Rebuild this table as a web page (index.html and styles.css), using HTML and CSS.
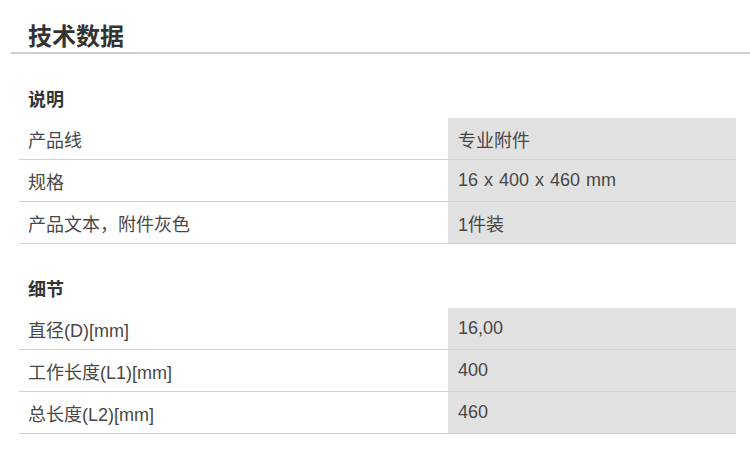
FILE: index.html
```html
<!DOCTYPE html>
<html lang="zh">
<head>
<meta charset="utf-8">
<link rel="stylesheet" href="styles.css">
</head>
<body>
<div class="page">
  <h2 class="title">技术数据</h2>
  <h3 class="section">说明</h3>
  <div class="table">
    <div class="row"><div class="key">产品线</div><div class="val">专业附件</div></div>
    <div class="row"><div class="key">规格</div><div class="val wide">16 x 400 x 460 mm</div></div>
    <div class="row"><div class="key">产品文本，附件灰色</div><div class="val">1件装</div></div>
  </div>
  <h3 class="section">细节</h3>
  <div class="table">
    <div class="row"><div class="key">直径(D)[mm]</div><div class="val">16,00</div></div>
    <div class="row"><div class="key">工作长度(L1)[mm]</div><div class="val">400</div></div>
    <div class="row"><div class="key">总长度(L2)[mm]</div><div class="val">460</div></div>
  </div>
</div>
</body>
</html>
```
FILE: styles.css
```css
html, body {
  margin: 0;
  padding: 0;
  background: #fff;
}
body {
  font-family: "Liberation Sans", "Noto Sans CJK SC", sans-serif;
  color: #474747;
}
.page {
  width: 750px;
}
.title {
  margin: 0 0 0 11px;
  padding: 22px 0 0 17px;
  font-size: 24px;
  line-height: 30px;
  font-weight: bold;
  color: #333;
  border-bottom: 2px solid #ccc;
}
.section {
  margin: 34px 0 6px 28px;
  font-size: 18px;
  line-height: 24px;
  font-weight: bold;
  color: #333;
}
.table {
  margin-left: 19px;
  width: 717px;
}
.row {
  display: grid;
  grid-template-columns: 429px 288px;
  border-bottom: 1px solid #d2d2d2;
}
.key, .val {
  height: 41px;
  display: flex;
  align-items: center;
  font-size: 18px;
}
.key {
  padding-left: 9px;
}
.val {
  padding-left: 10px;
  background: #e1e1e1;
}
.wide {
  word-spacing: 1px;
}
```
